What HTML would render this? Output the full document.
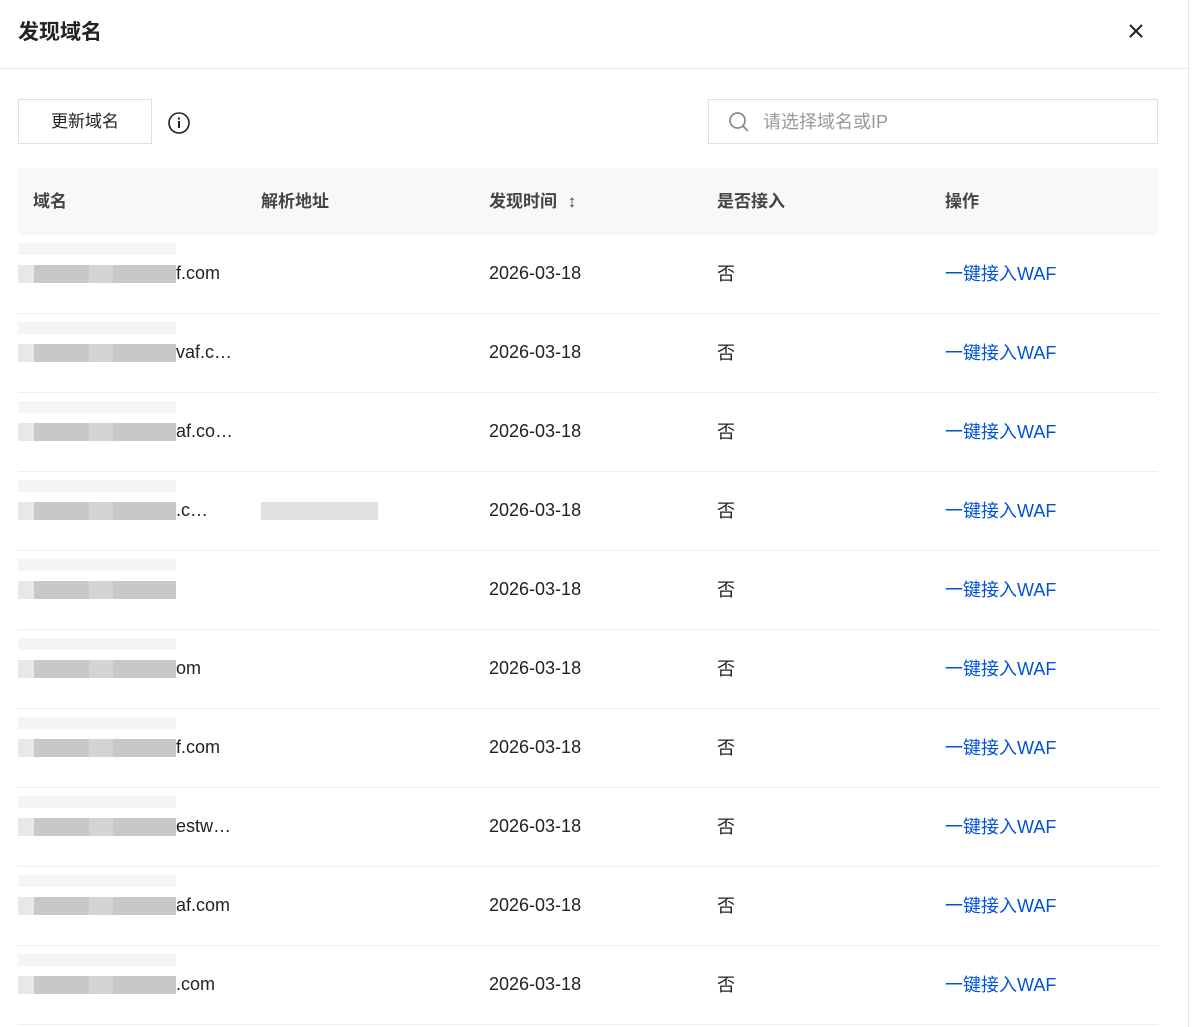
<!DOCTYPE html><html><head><meta charset="utf-8"><style>
*{margin:0;padding:0;box-sizing:border-box}
body{width:1192px;height:1027px;background:#fff;font-family:"Liberation Sans","Noto Sans CJK SC",sans-serif;position:relative;overflow:hidden;color:#000}
.a{position:absolute}
.title{left:18px;top:16px;font-size:21px;font-weight:bold;color:#222}
.hdr{left:0;top:68px;width:1188px;height:1px;background:#e6e8ec}
.vl{left:1188px;top:0;width:1px;height:1027px;background:#e6e8ec}
.btn{left:18px;top:99px;width:134px;height:45px;border:1px solid #dcdfe6;font-size:17px;text-align:center;line-height:44px;color:#222}
.srch{left:708px;top:99px;width:450px;height:45px;border:1px solid #dcdfe6}
.th{left:18px;top:168px;width:1140px;height:67px;background:#f8f8f8}
.th span{position:absolute;top:22px;font-size:17px;font-weight:bold;color:#444;line-height:24px}
.row{left:18px;width:1140px;height:79px;border-bottom:1px solid #eceef2;font-size:18px;color:#222}
.row span{position:absolute;top:27px;line-height:22px}
.row span.c{top:28px}
.blur{position:absolute;left:0;top:30px;width:158px;height:18px;background:linear-gradient(90deg,#e8e8e8 0 10%,#c8c8c8 10% 45%,#d4d4d4 45% 60%,#c8c8c8 60% 100%)}
.blur2{position:absolute;left:0;top:8px;width:158px;height:12px;background:#f5f5f5}
.lnk{color:#0052d9}
</style></head><body>
<div class="a title">发现域名</div>
<svg class="a" style="left:1128px;top:23px" width="16" height="16"><path d="M2 2L14 14M14 2L2 14" stroke="#222" stroke-width="2"/></svg>
<div class="a hdr"></div><div class="a vl"></div>
<div class="a btn">更新域名</div>
<svg class="a" style="left:167px;top:111px" width="24" height="24"><circle cx="12" cy="12" r="10" fill="none" stroke="#222" stroke-width="1.6"/><rect x="11" y="10" width="2" height="7" fill="#222"/><rect x="11" y="6.5" width="2" height="2" fill="#222"/></svg>
<div class="a srch"><svg class="a" style="left:19px;top:11px" width="22" height="22"><circle cx="9.5" cy="9.5" r="7.5" fill="none" stroke="#888" stroke-width="1.7"/><path d="M15 15L20 20" stroke="#888" stroke-width="1.7"/></svg><span class="a" style="left:54px;top:8px;font-size:18px;color:#999">请选择域名或IP</span></div>
<div class="a th"><span style="left:15px">域名</span><span style="left:243px">解析地址</span><span style="left:471px">发现时间 <span style="position:static;font-weight:normal;margin-left:6px">↕</span></span><span style="left:699px">是否接入</span><span style="left:927px">操作</span></div>
<div id="rows"></div>
<script>
var s=["f.com","vaf.c…","af.co…",".c…","","om","f.com","estw…","af.com",".com"],h="";
for(var i=0;i<10;i++){h+='<div class="a row" style="top:'+(235+i*79)+'px"><div class="blur2"></div><div class="blur"></div><span style="left:158px">'+s[i]+'</span>'+(i==3?'<div style="position:absolute;left:243px;top:30px;width:117px;height:18px;background:#e0e0e0"></div>':'')+'<span style="left:471px">2026-03-18</span><span class="c" style="left:699px">否</span><span class="lnk c" style="left:927px">一键接入WAF</span></div>'}
document.getElementById('rows').innerHTML=h;
</script>
</body></html>
